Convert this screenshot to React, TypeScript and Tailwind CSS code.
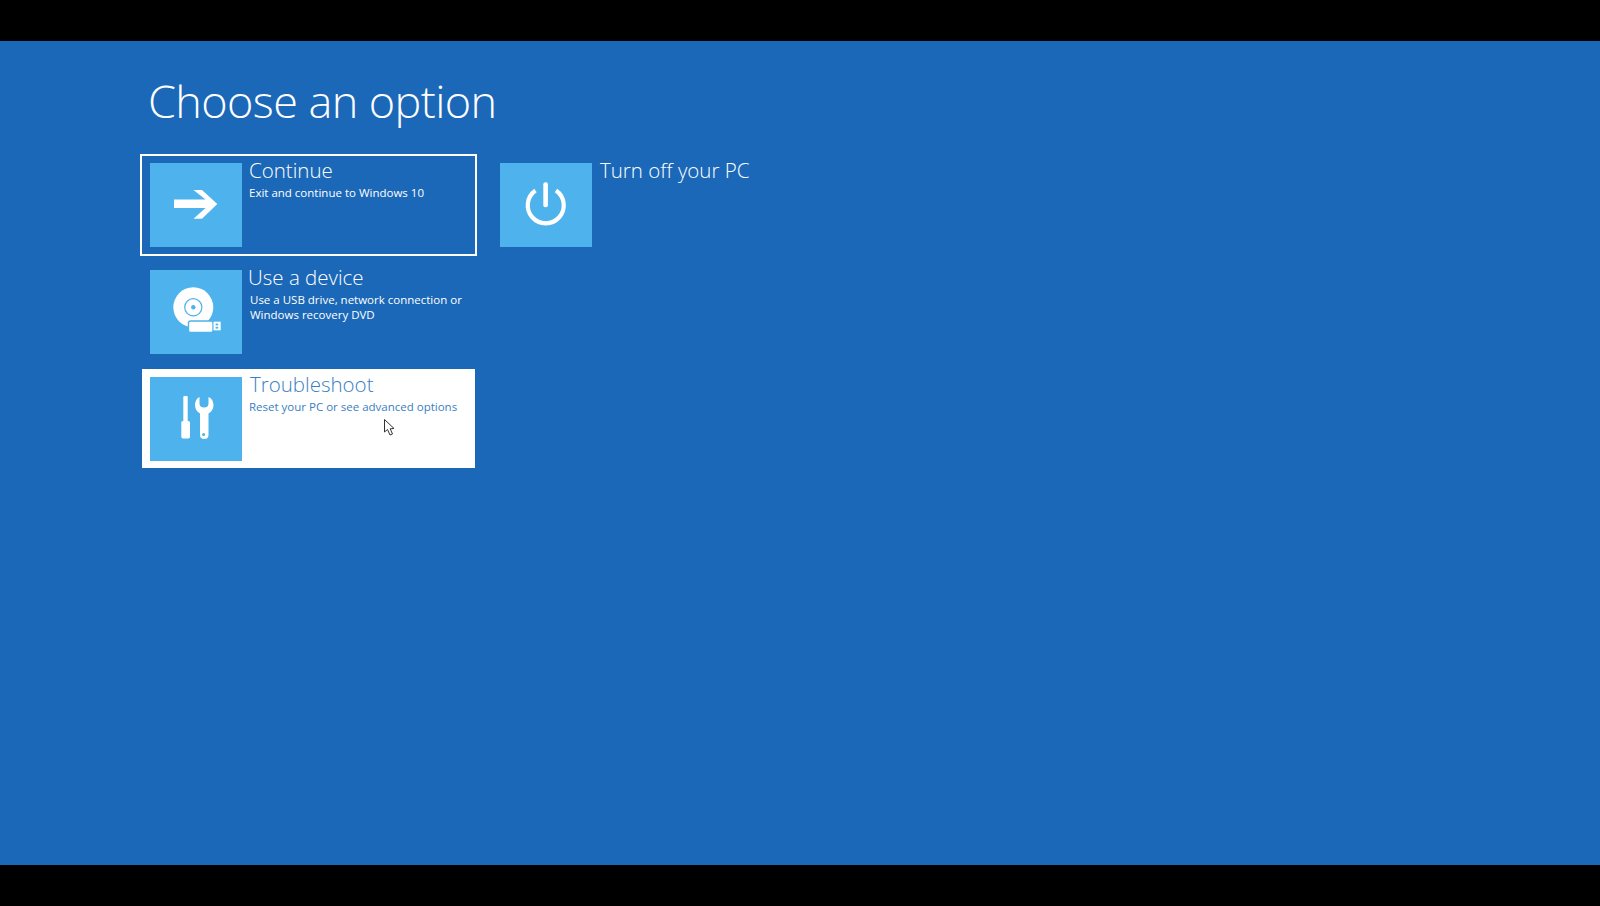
import type { ReactNode } from 'react'

function ArrowIcon() {
  return (
    <polygon
      fill="#fff"
      points="43.5,27 52,27 67.3,41 52,55.7 43.5,55.7 55.5,45 24,45 24,36.5 55.5,36.5"
    />
  )
}

function DeviceIcon() {
  return (
    <>
      <circle cx="43.3" cy="37.3" r="20" fill="#fff" />
      <circle cx="43.3" cy="37.3" r="8.6" fill="none" stroke="#4eb3ec" strokeWidth="1.2" />
      <circle cx="43.3" cy="37.3" r="2.2" fill="#4eb3ec" />
      <rect x="38.5" y="51" width="24.5" height="11.4" rx="2" fill="#fff" stroke="#4eb3ec" strokeWidth="1.4" />
      <rect x="63.5" y="51.7" width="7.2" height="8.6" fill="#fff" />
      <rect x="65.6" y="53.6" width="2.6" height="1.8" fill="#4eb3ec" />
      <rect x="65.6" y="56.8" width="2.6" height="1.8" fill="#4eb3ec" />
    </>
  )
}

function ToolsIcon() {
  return (
    <>
      <rect x="33.3" y="19" width="4.4" height="27" rx="1" fill="#fff" />
      <rect x="31.3" y="44" width="8.7" height="17.4" rx="1.6" fill="#fff" />
      <path
        fill="#fff"
        d="M49.5 20 L49.5 26.5 Q49.5 30.5 54.3 30.5 Q58.5 30.5 58.5 26.5 L58.5 20 C61.5 21 63.5 24.5 63.5 28 C63.5 32 61.5 35 58.5 36.5 L58.5 58 Q58.5 62 54.3 62 Q50 62 50 58 L50 36.5 C47 35 45 32 45 28 C45 24.5 47 21 49.5 20 Z"
      />
      <circle cx="53.6" cy="57.6" r="1.5" fill="#4eb3ec" />
    </>
  )
}

function PowerIcon() {
  return (
    <>
      <path
        d="M35.5 27.5 A18 18 0 1 0 56 27.5"
        fill="none"
        stroke="#fff"
        strokeWidth="4.2"
      />
      <rect x="43.3" y="19.3" width="4.6" height="25" rx="2" fill="#fff" />
    </>
  )
}

function Tile({ children }: { children: ReactNode }) {
  return (
    <div className="w-[92px] h-[84px] shrink-0 bg-[#4eb3ec]">
      <svg width="92" height="84" viewBox="0 0 92 84">
        {children}
      </svg>
    </div>
  )
}

interface OptionProps {
  icon: ReactNode
  title: string
  lines?: string[]
  state?: 'focus' | 'hover'
  titleClass?: string
  subClass?: string
}

function Option({ icon, title, lines = [], state, titleClass = '', subClass = '' }: OptionProps) {
  const box =
    state === 'focus'
      ? 'h-[102px] pt-[7px] border-white'
      : state === 'hover'
        ? 'h-[103px] pt-[8px] -mt-[1px] border-transparent bg-white bg-clip-padding'
        : 'h-[102px] pt-[7px] border-transparent'
  const textColor = state === 'hover' ? 'text-[#3a80c2]' : 'text-white'
  return (
    <div className={`flex w-[337px] border-2 pl-[8px] gap-[7px] ${box}`}>
      <Tile>{icon}</Tile>
      <div className="flex flex-col whitespace-nowrap">
        <div className={`text-[20.5px] leading-[26px] font-light -mt-[6px] ${textColor} ${titleClass}`}>
          {title}
        </div>
        <div className={`mt-[2px] text-[11.5px] leading-[15.3px] ${textColor} ${subClass}`}>
          {lines.map((line) => (
            <div key={line}>{line}</div>
          ))}
        </div>
      </div>
    </div>
  )
}

export default function App() {
  return (
    <div className="relative flex h-[906px] flex-col bg-black font-['Open_Sans',sans-serif]">
      <div className="h-[41px] shrink-0" />
      <main className="flex-1 bg-[#1b68b8] pl-[140px]">
        <h1 className="pt-[30px] ml-[8px] h-[113px] text-[45px] leading-[60px] font-light tracking-[-0.6px] text-white">
          Choose an option
        </h1>
        <div className="flex gap-[13px]">
          <div className="flex flex-col gap-[5px]">
            <Option
              icon={<ArrowIcon />}
              title="Continue"
              lines={['Exit and continue to Windows 10']}
              state="focus"
            />
            <Option
              icon={<DeviceIcon />}
              title="Use a device"
              lines={['Use a USB drive, network connection or', 'Windows recovery DVD']}
              titleClass="-ml-[1px]"
              subClass="ml-[1px]"
            />
            <Option
              icon={<ToolsIcon />}
              title="Troubleshoot"
              lines={['Reset your PC or see advanced options']}
              state="hover"
              titleClass="ml-[1px]"
            />
          </div>
          <div>
            <Option icon={<PowerIcon />} title="Turn off your PC" titleClass="ml-[1px]" />
          </div>
        </div>
      </main>
      <div className="h-[41px] shrink-0" />
      <svg className="absolute left-[383px] top-[418px]" width="13" height="19" viewBox="0 0 13 19">
        <path
          d="M1.5 1.5 L1.5 14 L4.5 11.5 L7 17 L9.5 16 L7.2 10.8 L11 10.5 Z"
          fill="#fff"
          stroke="#333"
          strokeWidth="1"
        />
      </svg>
    </div>
  )
}
